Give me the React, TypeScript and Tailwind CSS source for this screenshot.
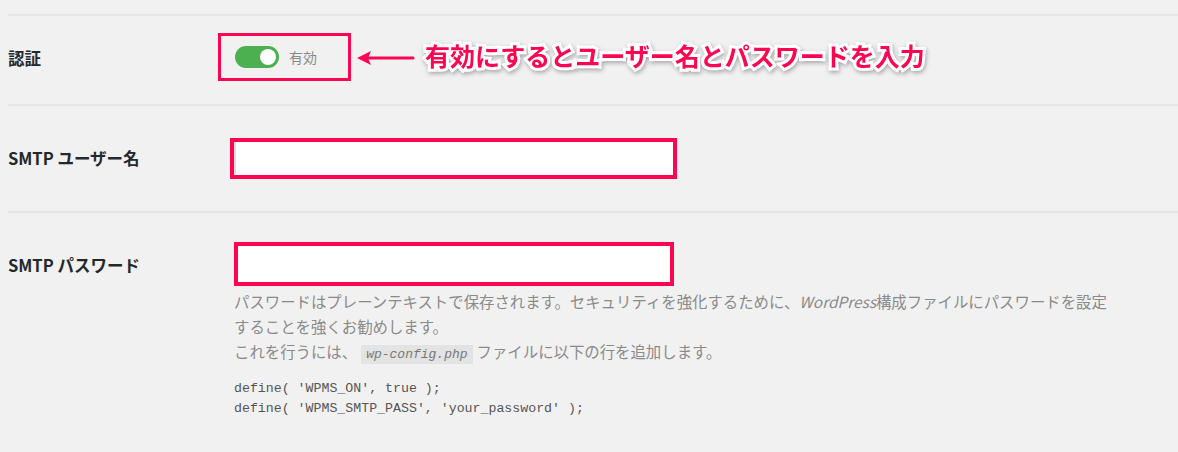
export default function App() {
  return (
    <div className="h-[452px] w-[1178px] overflow-hidden bg-[#f1f1f1] font-['Noto_Sans_CJK_JP','Noto_Sans',sans-serif]">
      <div className="pl-2 pt-[14px]">
        {/* 認証 */}
        <div className="flex h-[90px] items-start border-t-2 border-[#e6e6e6]">
          <div className="mt-[30px] w-[210px] text-[16.5px] font-bold leading-[24px] text-[#23282d]">認証</div>
          <div className="mt-[17px] flex h-[48px] w-[133px] items-center gap-[10px] border-[3px] border-[#fe0552] pl-[14px]">
            <div className="flex h-[22px] w-[44px] items-center justify-end rounded-full bg-[#4caf50] pr-[3px]">
              <div className="h-[16px] w-[16px] rounded-full bg-white" />
            </div>
            <span className="text-[14px] text-[#8a8a8a]">有効</span>
          </div>
          <svg className="ml-[6px] mt-[34px]" width="58" height="16" viewBox="0 0 58 16">
            <path d="M0 8 L14 1 L11 8 L14 15 Z" fill="#fe0552" />
            <line x1="10" y1="8" x2="56" y2="8" stroke="#fe0552" strokeWidth="3" strokeLinecap="round" />
          </svg>
          <span className="ml-[10px] mt-[22px] text-[25px] font-bold leading-[34px] text-[#fe0552] [-webkit-text-stroke:6px_#fff] [paint-order:stroke_fill] drop-shadow-[1px_2px_2px_rgba(0,0,0,0.3)]">
            有効にするとユーザー名とパスワードを入力
          </span>
        </div>

        {/* SMTP ユーザー名 */}
        <div className="flex h-[107px] items-start border-t-2 border-[#e6e6e6]">
          <div className="mt-[40px] w-[222px] text-[16.5px] font-bold leading-[24px] text-[#23282d]">SMTP ユーザー名</div>
          <div className="mt-[32px] h-[41px] w-[447px] border-4 border-[#fe0552] bg-white">
            <div className="h-full w-full border-l-2 border-[#dcdcdc]" />
          </div>
        </div>

        {/* SMTP パスワード */}
        <div className="flex items-start border-t-2 border-[#e6e6e6]">
          <div className="mt-[40px] w-[226px] text-[16.5px] font-bold leading-[24px] text-[#23282d]">SMTP パスワード</div>
          <div className="mt-[29px]">
            <div className="h-[44px] w-[440px] border-4 border-[#fe0552] bg-white" />
            <p className="mt-[3px] whitespace-nowrap text-[15.4px] leading-[25px] text-[#8a8a8a]">
              パスワードはプレーンテキストで保存されます。セキュリティを強化するために、<i>WordPress</i>構成ファイルにパスワードを設定
              <br />
              することを強くお勧めします。
              <br />
              これを行うには、
              <code className="mx-[4px] bg-[#e3e3e3] px-[5px] py-[2px] font-['Liberation_Mono',monospace] text-[13px] italic text-[#777]">
                wp-config.php
              </code>
              ファイルに以下の行を追加します。
            </p>
            <pre className="mt-[12px] font-['Liberation_Mono',monospace] text-[13.25px] leading-[20px] text-[#555]">
              {"define( 'WPMS_ON', true );\ndefine( 'WPMS_SMTP_PASS', 'your_password' );"}
            </pre>
          </div>
        </div>
      </div>
    </div>
  );
}
